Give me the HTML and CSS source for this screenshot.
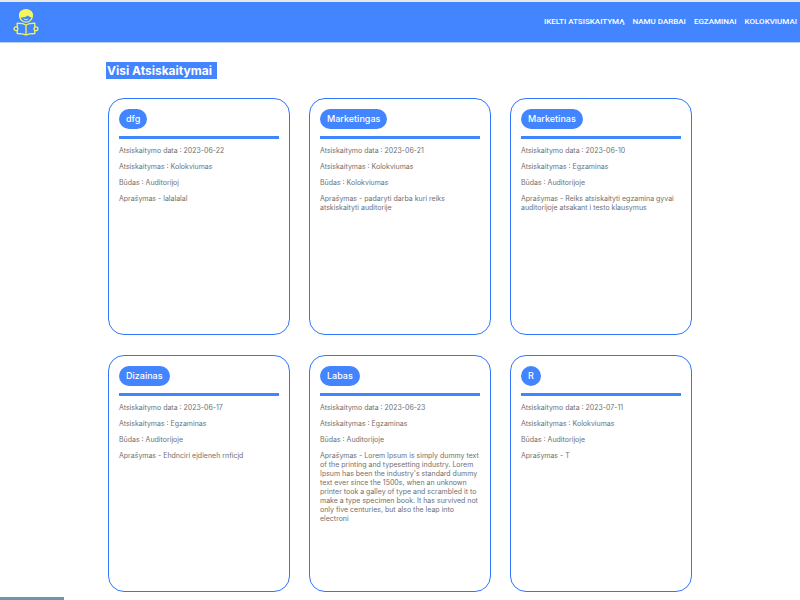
FILE: index.html
```html
<!DOCTYPE html>
<html lang="lt">
<head>
  <meta charset="UTF-8" />
  <meta name="viewport" content="width=device-width, initial-scale=1.0" />
  <title>Visi Atsiskaitymai</title>
  <link rel="stylesheet" href="styles.css">
</head>
<body>
  <header class="navbar">
    <a class="logo" href="#" aria-label="Pradžia">
      <svg viewBox="0 0 26 27" width="26" height="27" fill="none" stroke="#f4f65c" stroke-width="1.3" stroke-linejoin="round">
        <circle cx="13" cy="7" r="6.2" />
        <path d="M6.800 7.800C5.800 3 9 .8 13 .8s7.200 2.400 6.200 7C17 7.800 15.800 7 14.800 5.600 13 7.600 10 8.200 6.800 7.800z" fill="#f4f65c" />
        <path d="M10.800 10q2.200 1.600 4.400 0" stroke-width="1" />
        <path d="M13 16.200c-2-1.400-5-2-8.800-2v10.300c3.200 0 6.800.5 8.800 1.500 2-1 5.600-1.500 8.800-1.500V14.200c-3.800 0-6.800.6-8.800 2zM13 16.200V26" />
        <circle cx="3" cy="19.800" r="1.900" fill="#4385ff" />
        <circle cx="23" cy="19.800" r="1.900" fill="#4385ff" />
      </svg>
    </a>
    <nav class="menu">
      <a href="#">IKELTI ATSISKAITYMĄ</a>
      <a href="#">NAMU DARBAI</a>
      <a href="#">EGZAMINAI</a>
      <a href="#">KOLOKVIUMAI</a>
    </nav>
  </header>

  <main class="content">
    <h1 class="title">Visi Atsiskaitymai</h1>

    <div class="cards">
      <article class="card">
        <h2 class="subject">dfg</h2>
        <hr class="line">
        <p>Atsiskaitymo data : 2023-06-22</p>
        <p>Atsiskaitymas : Kolokviumas</p>
        <p>Būdas : Auditorijoj</p>
        <p>Aprašymas - lalalalal</p>
      </article>

      <article class="card">
        <h2 class="subject">Marketingas</h2>
        <hr class="line">
        <p>Atsiskaitymo data : 2023-06-21</p>
        <p>Atsiskaitymas : Kolokviumas</p>
        <p>Būdas : Kolokviumas</p>
        <p>Aprašymas - padaryti darba kuri reiks atskiskaityti auditorije</p>
      </article>

      <article class="card">
        <h2 class="subject">Marketinas</h2>
        <hr class="line">
        <p>Atsiskaitymo data : 2023-06-10</p>
        <p>Atsiskaitymas : Egzaminas</p>
        <p>Būdas : Auditorijoje</p>
        <p>Aprašymas - Reiks atsiskaityti egzamina gyvai auditorijoje atsakant i testo klausymus</p>
      </article>

      <article class="card">
        <h2 class="subject">Dizainas</h2>
        <hr class="line">
        <p>Atsiskaitymo data : 2023-06-17</p>
        <p>Atsiskaitymas : Egzaminas</p>
        <p>Būdas : Auditorijoje</p>
        <p>Aprašymas - Ehdnciri ejdieneh rnficjd</p>
      </article>

      <article class="card">
        <h2 class="subject">Labas</h2>
        <hr class="line">
        <p>Atsiskaitymo data : 2023-06-23</p>
        <p>Atsiskaitymas : Egzaminas</p>
        <p>Būdas : Auditorijoje</p>
        <p>Aprašymas - Lorem Ipsum is simply dummy text of the printing and typesetting industry. Lorem Ipsum has been the industry's standard dummy text ever since the 1500s, when an unknown printer took a galley of type and scrambled it to make a type specimen book. It has survived not only five centuries, but also the leap into electroni</p>
      </article>

      <article class="card">
        <h2 class="subject">R</h2>
        <hr class="line">
        <p>Atsiskaitymo data : 2023-07-11</p>
        <p>Atsiskaitymas : Kolokviumas</p>
        <p>Būdas : Auditorijoje</p>
        <p>Aprašymas - T</p>
      </article>
    </div>
  </main>

  <div class="status"></div>
</body>
</html>
```
FILE: styles.css
```css
* {
  box-sizing: border-box;
}
body {
  margin: 0;
  font-family: Inter, "Liberation Sans", sans-serif;
  background-color: #fff;
}
.navbar {
  display: flex;
  justify-content: space-between;
  align-items: center;
  height: 43px;
  padding: 0 3px 0 13px;
  background-color: #4385ff;
  border-top: 2px solid #e8e8e8;
  border-bottom: 1px solid #b9d3ff;
}
.logo svg {
  display: block;
}
.menu {
  display: flex;
  gap: 8px;
}
.menu a {
  color: #fff;
  font-family: Roboto, sans-serif;
  font-size: 8px;
  font-weight: 500;
  line-height: 12px;
  text-decoration: none;
}
.content {
  padding: 19px 108px 0;
}
.title {
  width: fit-content;
  margin: 0 0 19px -2px;
  padding: 0 5px 0 1px;
  color: #fff;
  background-color: #4385ff;
  font-size: 12px;
  font-weight: 700;
  line-height: 17px;
}
.cards {
  display: grid;
  grid-template-columns: repeat(3, 1fr);
  gap: 20px 19px;
}
.card {
  min-height: 237px;
  padding: 10px;
  border: 1px solid #2f75ff;
  border-radius: 16px;
}
.subject {
  width: fit-content;
  margin: 0;
  padding: 0 7px;
  color: #fff;
  background-color: #4385ff;
  border-radius: 10px;
  font-size: 9px;
  font-weight: 500;
  line-height: 20px;
}
.line {
  height: 3px;
  margin: 7px 0;
  border: none;
  background-color: #3f86ff;
}
.card p {
  margin: 0 0 7px;
  color: #707070;
  font-size: 7px;
  font-weight: 400;
  line-height: 9px;
}
.status {
  position: fixed;
  left: 0;
  bottom: 0;
  width: 64px;
  height: 3px;
  background-color: #6f97a8;
}
```
